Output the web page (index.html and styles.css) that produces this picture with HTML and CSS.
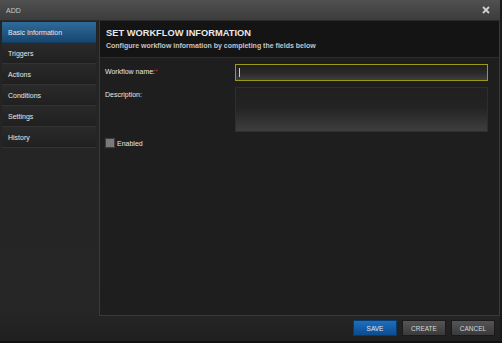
FILE: index.html
```html
<!DOCTYPE html>
<html>
<head>
    <title>Add Workflow</title>
    <link rel="stylesheet" href="styles.css">
</head>
<body>
    <div class="dialog">
        <div class="titlebar">
            <span class="titlebar-text">ADD</span>
            <svg class="close-icon" width="8" height="8" viewBox="0 0 8 8">
                <path d="M1 1 L7 7 M7 1 L1 7" stroke="#d0d0d0" stroke-width="1.8"/>
            </svg>
        </div>

        <div class="dialog-body">
            <div class="sidebar">
                <div class="nav-item active">Basic Information</div>
                <div class="nav-item">Triggers</div>
                <div class="nav-item">Actions</div>
                <div class="nav-item">Conditions</div>
                <div class="nav-item">Settings</div>
                <div class="nav-item">History</div>
            </div>

            <div class="main-panel">
                <div class="panel-header">
                    <h1 class="panel-title">SET WORKFLOW INFORMATION</h1>
                    <div class="panel-subtitle">Configure workflow information by completing the fields below</div>
                </div>
                <div class="form">
                    <div class="form-row">
                        <label class="form-label">Workflow name:<span class="required">*</span></label>
                        <div class="text-input focused"><span class="caret"></span></div>
                    </div>
                    <div class="form-row">
                        <label class="form-label">Description:</label>
                        <div class="text-area"></div>
                    </div>
                    <div class="check-row">
                        <span class="checkbox"></span>
                        <span class="check-label">Enabled</span>
                    </div>
                </div>
            </div>
        </div>

        <div class="footer">
            <button class="button primary">SAVE</button>
            <button class="button">CREATE</button>
            <button class="button">CANCEL</button>
        </div>
    </div>
</body>
</html>
```

FILE: styles.css
```css
:root {
    --text-color: #e6e6e6;
    --panel-bg: #1e1e1e;
    --header-bg: #141414;
    --border-color: #3a3a3a;
}

html, body {
    margin: 0;
    padding: 0;
}

body {
    width: 502px;
    height: 343px;
    background: #111;
    font-family: "Liberation Sans", Arial, sans-serif;
    color: var(--text-color);
    overflow: hidden;
}

.dialog {
    display: flex;
    flex-direction: column;
    height: 341px;
    background: linear-gradient(to bottom, #242424, #262626 90%, #202020);
    border-right: 2px solid #1a1a1a;
}

.titlebar {
    height: 20px;
    flex-shrink: 0;
    display: flex;
    align-items: center;
    justify-content: space-between;
    padding: 0 10px 0 6px;
    background: linear-gradient(to bottom, #505050, #3c3c3c);
    border-bottom: 1px solid #2a2a2a;
}

.titlebar-text {
    font-size: 7px;
    color: #c8c8c8;
}

.close-icon {
    display: block;
}

.dialog-body {
    flex: 1;
    display: flex;
    min-height: 0;
}

.sidebar {
    width: 94px;
    padding: 1px 2px 0 2px;
    flex-shrink: 0;
}

.nav-item {
    height: 20px;
    display: flex;
    align-items: center;
    padding-left: 6px;
    font-size: 7px;
    background: linear-gradient(to bottom, #2a2a2a, #202020);
    border-bottom: 1px solid #333;
    color: #e8e8e8;
}

.nav-item.active {
    background: linear-gradient(to bottom, #2f6b9a, #17466e);
    border-bottom-color: #123a5c;
}

.main-panel {
    flex: 1;
    display: flex;
    flex-direction: column;
    background: var(--panel-bg);
    border-left: 1px solid var(--border-color);
    border-bottom: 1px solid var(--border-color);
    border-right: 1px solid var(--border-color);
    margin-bottom: 4px;
    margin-left: 1px;
}

.panel-header {
    height: 37px;
    background: var(--header-bg);
    border-bottom: 1px solid #2c2c2c;
    padding: 6px 6px 0 6px;
    box-sizing: border-box;
}

.panel-title {
    margin: 0;
    font-size: 9.3px;
    font-weight: bold;
    color: #e8e8e8;
    line-height: 13px;
}

.panel-subtitle {
    font-size: 7px;
    font-weight: bold;
    color: #c4c4c4;
    margin-top: 2px;
}

.form {
    padding: 6px 11px 0 5px;
}

.form-row {
    display: flex;
    margin-bottom: 6px;
}

.form-label {
    width: 130px;
    font-size: 7px;
    padding-top: 4px;
    flex-shrink: 0;
}

.required {
    color: #d02020;
}

.text-input {
    flex: 1;
    height: 15px;
    border: 1px solid #9c9c14;
    background: linear-gradient(to bottom, #1f1f1f, #2a2a2a 55%, #3f3f3f);
    display: flex;
    align-items: center;
    padding-left: 3px;
}

.caret {
    width: 1px;
    height: 9px;
    background: #c8c8c8;
}

.text-area {
    flex: 1;
    height: 43px;
    border: 1px solid #2e2e2e;
    background: linear-gradient(to bottom, #202020, #232323 45%, #3e3e3e);
}

.check-row {
    display: flex;
    align-items: center;
    gap: 2px;
}

.checkbox {
    width: 8px;
    height: 8px;
    background: #7a7a7a;
    border: 1px solid #3c3c3c;
    outline: 1px solid #222;
}

.check-label {
    font-size: 7px;
}

.footer {
    height: 21px;
    flex-shrink: 0;
    display: flex;
    justify-content: flex-end;
    align-items: flex-start;
    gap: 5px;
    padding: 0 5px 0 0;
}

.button {
    width: 44px;
    height: 16px;
    padding: 0;
    font-family: "Liberation Sans", Arial, sans-serif;
    font-size: 6.5px;
    color: #d6d6d6;
    border: 1px solid #1a1a1a;
    background: linear-gradient(to bottom, #555, #3a3a3a);
}

.button.primary {
    background: linear-gradient(to bottom, #1c6fc0, #0b4c8f);
    border-color: #0a3a6a;
    color: #e0e8f0;
}
```
